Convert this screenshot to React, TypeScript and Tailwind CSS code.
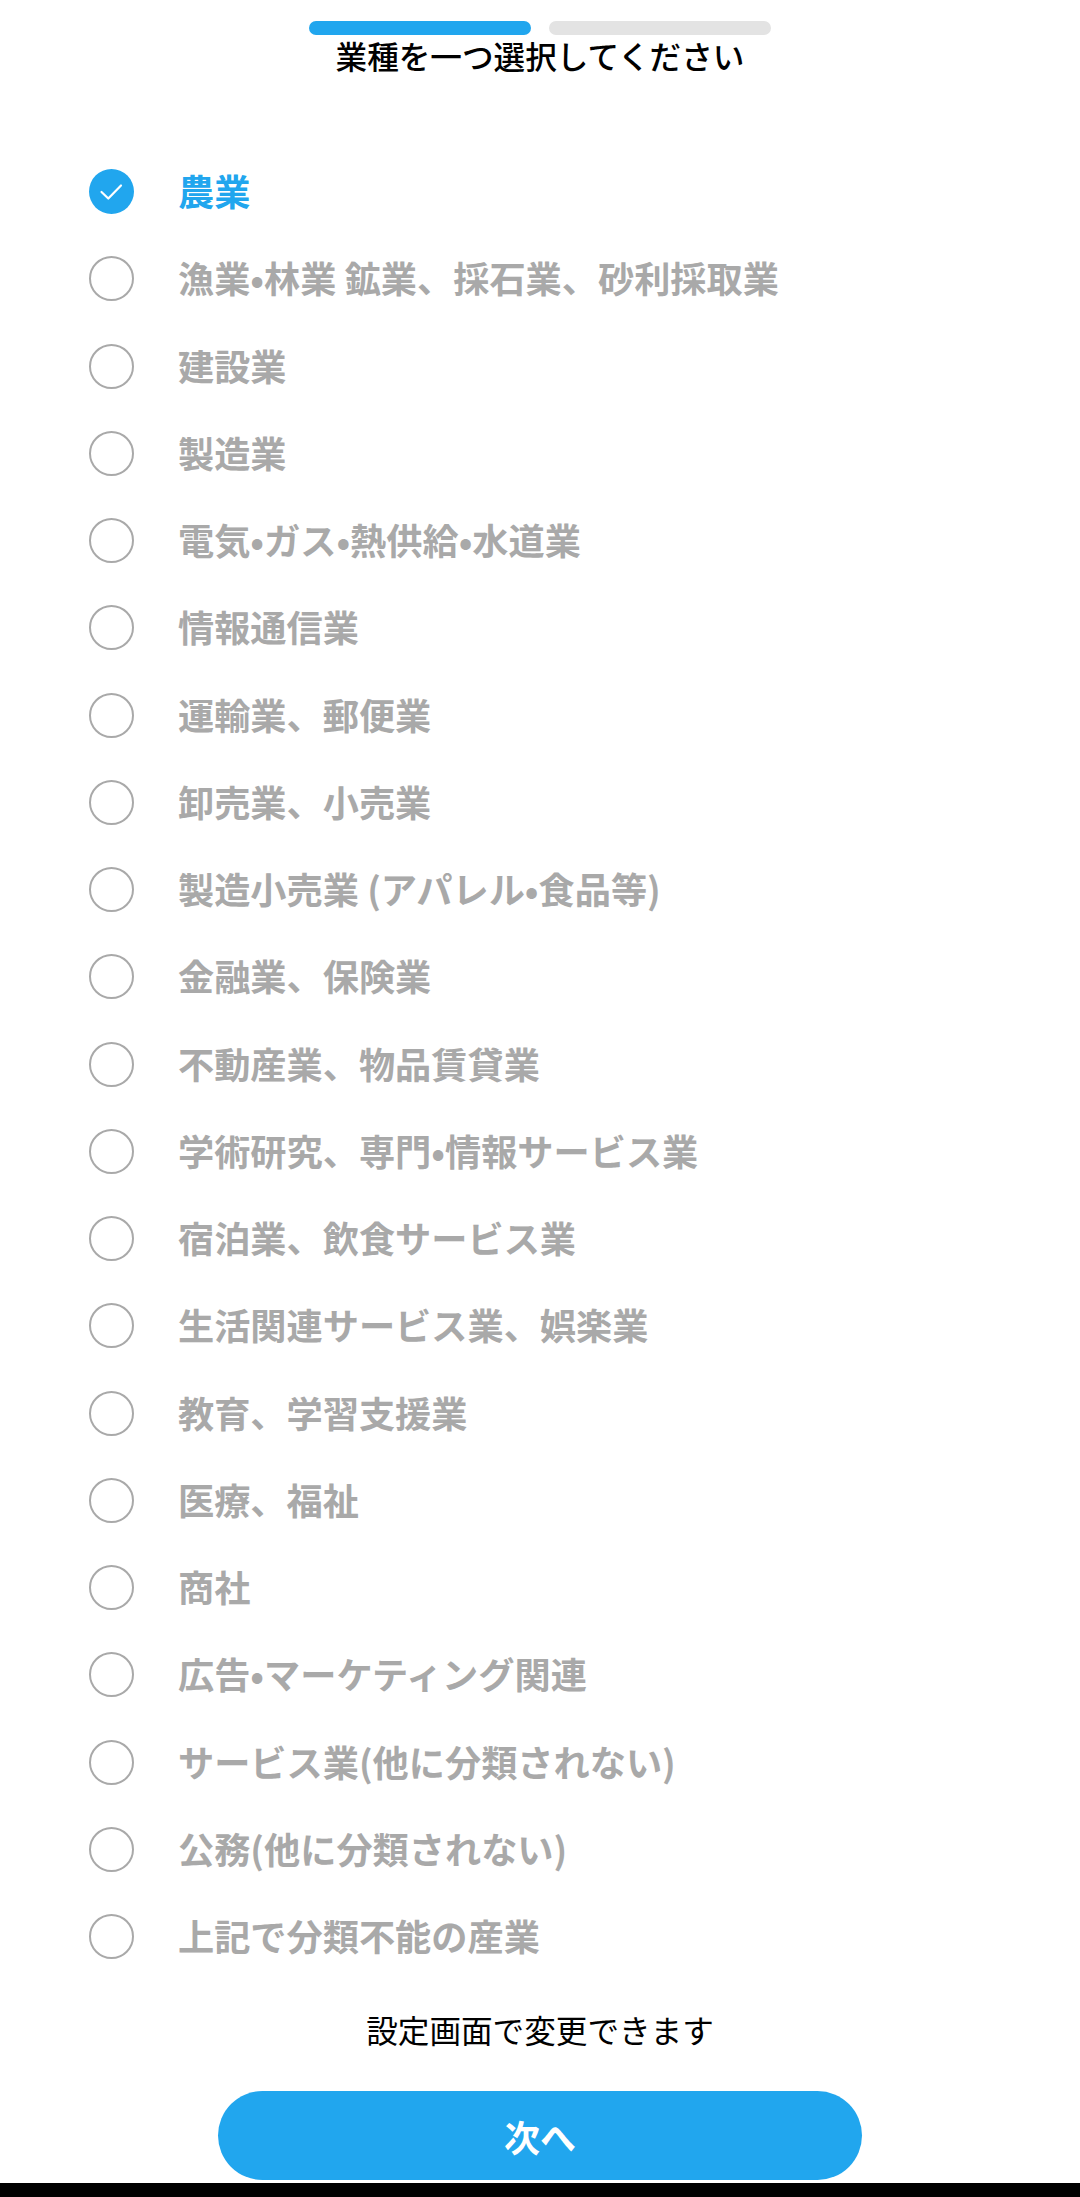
const industries = [
  '農業',
  '漁業•林業 鉱業、採石業、砂利採取業',
  '建設業',
  '製造業',
  '電気•ガス•熱供給•水道業',
  '情報通信業',
  '運輸業、郵便業',
  '卸売業、小売業',
  '製造小売業 (アパレル•食品等)',
  '金融業、保険業',
  '不動産業、物品賃貸業',
  '学術研究、専門•情報サービス業',
  '宿泊業、飲食サービス業',
  '生活関連サービス業、娯楽業',
  '教育、学習支援業',
  '医療、福祉',
  '商社',
  '広告•マーケティング関連',
  'サービス業(他に分類されない)',
  '公務(他に分類されない)',
  '上記で分類不能の産業',
]

function CheckCircle() {
  return (
    <svg width="45" height="45" viewBox="0 0 45 45" fill="none" className="shrink-0">
      <circle cx="22.5" cy="22.5" r="22.5" fill="#21a6ee" />
      <path d="M12.5 23l6.8 6.5L32 16.5" stroke="#ffffff" strokeWidth="2.2" strokeLinecap="round" strokeLinejoin="round" />
    </svg>
  )
}

export default function App() {
  return (
    <div className="flex h-[2197px] w-[1080px] flex-col overflow-hidden bg-white font-['Noto_Sans_CJK_JP',sans-serif]">
      {/* Progress */}
      <div className="flex justify-center gap-[18px] pt-[21px]">
        <div className="h-[14px] w-[222px] rounded-full bg-[#21a6ee]" />
        <div className="h-[14px] w-[222px] rounded-full bg-[#e3e3e3]" />
      </div>
      <h1 className="text-center text-[31.6px] leading-[40px] font-medium text-black">業種を一つ選択してください</h1>

      {/* Industry list */}
      <ul className="mt-[73px] flex flex-col pl-[89px]">
        {industries.map((name, i) => (
          <li key={name} className="flex h-[87.25px] items-center gap-[44px]">
            {i === 0 ? (
              <CheckCircle />
            ) : (
              <span className="h-[45px] w-[45px] shrink-0 rounded-full border-2 border-[#a9a9a9]" />
            )}
            <span className={`pb-[3px] text-[36.2px] leading-[50px] font-bold ${i === 0 ? 'text-[#21a6ee]' : 'text-[#a9a9a9]'}`}>{name}</span>
          </li>
        ))}
      </ul>

      <p className="mt-[26px] text-center text-[31.6px] leading-[46px] text-black">設定画面で変更できます</p>

      <button className="mx-auto mt-[39px] h-[89px] w-[644px] shrink-0 rounded-full bg-[#21a6ee] text-[36px] font-bold text-white">次へ</button>

      <div className="mt-auto h-[14px] bg-black" />
    </div>
  )
}
